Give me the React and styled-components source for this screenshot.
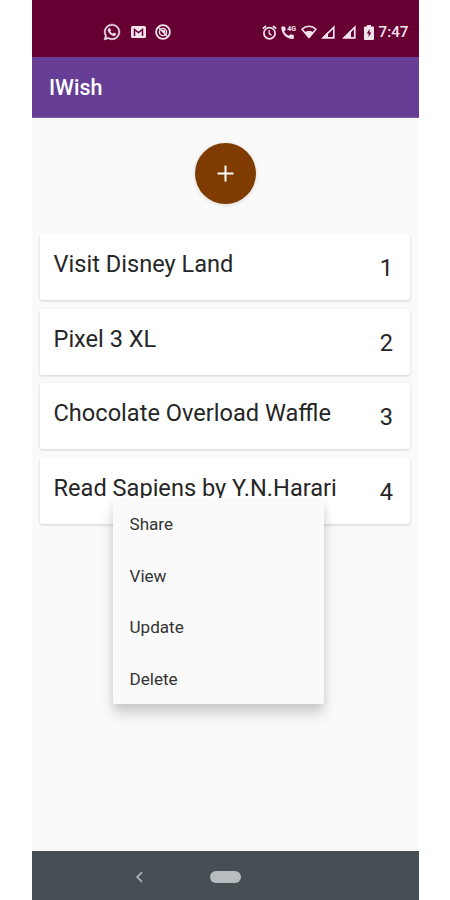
import { useState } from "react";
import styled, { createGlobalStyle } from "styled-components";
import { FaWhatsapp } from "react-icons/fa";

const GlobalStyle = createGlobalStyle`
  * {
    box-sizing: border-box;
  }

  body {
    margin: 0;
    background: #fff;
    font-family: Roboto, "Liberation Sans", sans-serif;
  }
`;

const Phone = styled.div`
  display: flex;
  flex-direction: column;
  width: 387px;
  height: 900px;
  margin-left: 32px;
  background: #fafafa;
`;

const StatusBar = styled.div`
  display: flex;
  align-items: center;
  justify-content: space-between;
  height: 57px;
  padding: 7px 10.5px 0 71px;
  background: #660033;
  color: #f3e4ec;
`;

const StatusGroup = styled.div`
  display: flex;
  align-items: center;
  gap: ${({ $gap }) => $gap}px;
`;

const Whatsapp = styled(FaWhatsapp)`
  stroke: currentColor;
  stroke-width: 14px;
`;

const Clock = styled.span`
  margin-left: 1px;
  font-size: 15.2px;
  font-weight: 500;
  line-height: 18px;
`;

const AppBar = styled.header`
  display: flex;
  align-items: center;
  height: 60.5px;
  padding: 2px 17px 0;
  background: #663e96;
  border-bottom: 1px solid #7d5ca5;
`;

const Title = styled.h1`
  margin: 0;
  color: #fff;
  font-size: 21.5px;
  font-weight: 500;
  line-height: 26px;
`;

const Content = styled.main`
  display: flex;
  flex: 1;
  flex-direction: column;
  align-items: center;
  padding: 25.5px 9px 0 8px;
`;

const AddButton = styled.button`
  display: flex;
  align-items: center;
  justify-content: center;
  width: 61px;
  height: 61px;
  padding: 0;
  border: none;
  border-radius: 50%;
  background: #803c00;
  box-shadow: 0 1px 4px rgba(0, 0, 0, 0.14);
  cursor: pointer;
`;

const WishList = styled.div`
  display: flex;
  flex-direction: column;
  gap: 8.7px;
  width: 100%;
  margin-top: 30px;
`;

const WishCard = styled.div`
  display: flex;
  justify-content: space-between;
  height: 66px;
  padding: 15px 17px 0 13.5px;
  border-radius: 2px;
  background: #fff;
  box-shadow: 0 1px 3px rgba(0, 0, 0, 0.17);
  color: #262626;
  font-size: 23.6px;
  line-height: 30px;
  white-space: nowrap;
`;

const WishNumber = styled.span`
  padding-top: 4px;
`;

const MenuAnchor = styled.div`
  position: relative;
`;

const Menu = styled.div`
  position: absolute;
  top: 40px;
  left: 73px;
  width: 210.5px;
  height: 206px;
  border-radius: 2px;
  background: #fafafa;
  box-shadow: 0 10px 14px rgba(0, 0, 0, 0.16), 0 3px 9px rgba(0, 0, 0, 0.07);
  clip-path: inset(0 -30px -40px -30px);
`;

const MenuItem = styled.div`
  display: flex;
  align-items: center;
  height: 51.7px;
  padding: 0 16.5px;
  color: #333;
  font-size: 17.1px;
  cursor: pointer;
`;

const NavBar = styled.nav`
  display: flex;
  align-items: center;
  height: 49px;
  padding: 3px 0 0 102.5px;
  background: #464f53;
`;

const HomePill = styled.div`
  width: 31px;
  height: 12px;
  margin-left: 66.5px;
  border-radius: 6px;
  background: #b7bcbf;
`;

const wishes = [
  "Visit Disney Land",
  "Pixel 3 XL",
  "Chocolate Overload Waffle",
  "Read Sapiens by Y.N.Harari",
];

const actions = ["Share", "View", "Update", "Delete"];

const MailIcon = () => (
  <svg width="15" height="12" viewBox="0 0 15 12" fill="none">
    <rect width="15" height="12" rx="1.5" fill="currentColor" />
    <path d="M3.5 10V3.5l4 3 4-3V10" stroke="#660033" strokeWidth="1.5" />
  </svg>
);

const BlockedIcon = () => (
  <svg width="16" height="16" viewBox="0 0 16 16" fill="none" stroke="currentColor">
    <circle cx="8" cy="8" r="6.9" strokeWidth="1.8" />
    <circle cx="8" cy="8" r="3.6" strokeWidth="1.4" />
    <path d="M3.5 3.5l9 9M7 6.5h2.5v3" strokeWidth="1.4" />
  </svg>
);

const AlarmIcon = () => (
  <svg width="15" height="15" viewBox="0 0 15 15" fill="none" stroke="currentColor">
    <circle cx="7.5" cy="8.2" r="5.6" strokeWidth="1.7" />
    <path d="M.8 3.6L4 1M14.2 3.6L11 1" strokeWidth="1.7" />
    <path d="M7.2 5v3.6l2.4 1.6" strokeWidth="1.3" />
  </svg>
);

const CallIcon = () => (
  <svg width="16" height="16" viewBox="0 0 16 16" fill="currentColor">
    <path d="M1 2.5h3l.8 3.3-1.6 1.7c1 2 2.6 3.4 4.6 4.3l1.7-1.6 3.3.8v3c0 .6-.3 1-1 1C5.4 15 .4 9.5.3 3.3c0-.5.3-.8.7-.8z" />
    <text x="6.3" y="7" fontSize="7" fontWeight="700">
      4G
    </text>
  </svg>
);

const WifiIcon = () => (
  <svg width="16" height="14" viewBox="0 0 16 14">
    <path
      d="M1 4.2C5 .3 11 .3 15 4.2L8 12.5z"
      fill="none"
      stroke="currentColor"
      strokeWidth="1.6"
      strokeLinejoin="round"
    />
    <path d="M3.6 7.4c2.4-1.9 6.4-1.9 8.8 0L8 13z" fill="currentColor" />
  </svg>
);

const SignalIcon = ({ cut }) => (
  <svg width="14" height="14" viewBox="0 0 14 14">
    <path
      d="M2.2 12.8L12.8 2.2v10.6z"
      fill="none"
      stroke="currentColor"
      strokeWidth="1.7"
    />
    <path d={`M1 13L${cut} ${14 - cut}V13z`} fill="currentColor" />
  </svg>
);

const BatteryIcon = () => (
  <svg width="10" height="15" viewBox="0 0 10 15">
    <path
      d="M3 0h4v1.5h2c.6 0 1 .4 1 1V14c0 .6-.4 1-1 1H1c-.6 0-1-.4-1-1V2.5c0-.6.4-1 1-1h2z"
      fill="currentColor"
    />
    <path d="M5.6 4L2.8 8.5h1.8V12l2.7-4.5H5.6z" fill="#660033" />
  </svg>
);

const PlusIcon = () => (
  <svg width="17" height="17" viewBox="0 0 17 17" stroke="#fff" strokeWidth="2">
    <path d="M8.5 .5v16M.5 8.5h16" />
  </svg>
);

const BackIcon = () => (
  <svg width="9" height="12" viewBox="0 0 9 12" fill="none">
    <path d="M7 1.2L2.2 6 7 10.8" stroke="#a9afb2" strokeWidth="1.8" />
  </svg>
);

const App = () => {
  const [menuOpen, setMenuOpen] = useState(true);

  return (
    <Phone>
      <GlobalStyle />
      <StatusBar>
        <StatusGroup $gap={9.5}>
          <Whatsapp size={18} />
          <MailIcon />
          <BlockedIcon />
        </StatusGroup>
        <StatusGroup $gap={4}>
          <AlarmIcon />
          <CallIcon />
          <WifiIcon />
          <StatusGroup $gap={7.5}>
            <SignalIcon cut={7} />
            <SignalIcon cut={9} />
            <BatteryIcon />
          </StatusGroup>
          <Clock>7:47</Clock>
        </StatusGroup>
      </StatusBar>
      <AppBar>
        <Title>IWish</Title>
      </AppBar>
      <Content>
        <AddButton>
          <PlusIcon />
        </AddButton>
        <WishList>
          {wishes.map((wish, i) => (
            <MenuAnchor key={wish}>
              <WishCard onClick={() => setMenuOpen(!menuOpen)}>
                <span>{wish}</span>
                <WishNumber>{i + 1}</WishNumber>
              </WishCard>
              {menuOpen && i === wishes.length - 1 && (
                <Menu>
                  {actions.map((action) => (
                    <MenuItem key={action} onClick={() => setMenuOpen(false)}>
                      {action}
                    </MenuItem>
                  ))}
                </Menu>
              )}
            </MenuAnchor>
          ))}
        </WishList>
      </Content>
      <NavBar>
        <BackIcon />
        <HomePill />
      </NavBar>
    </Phone>
  );
};

export default App;
